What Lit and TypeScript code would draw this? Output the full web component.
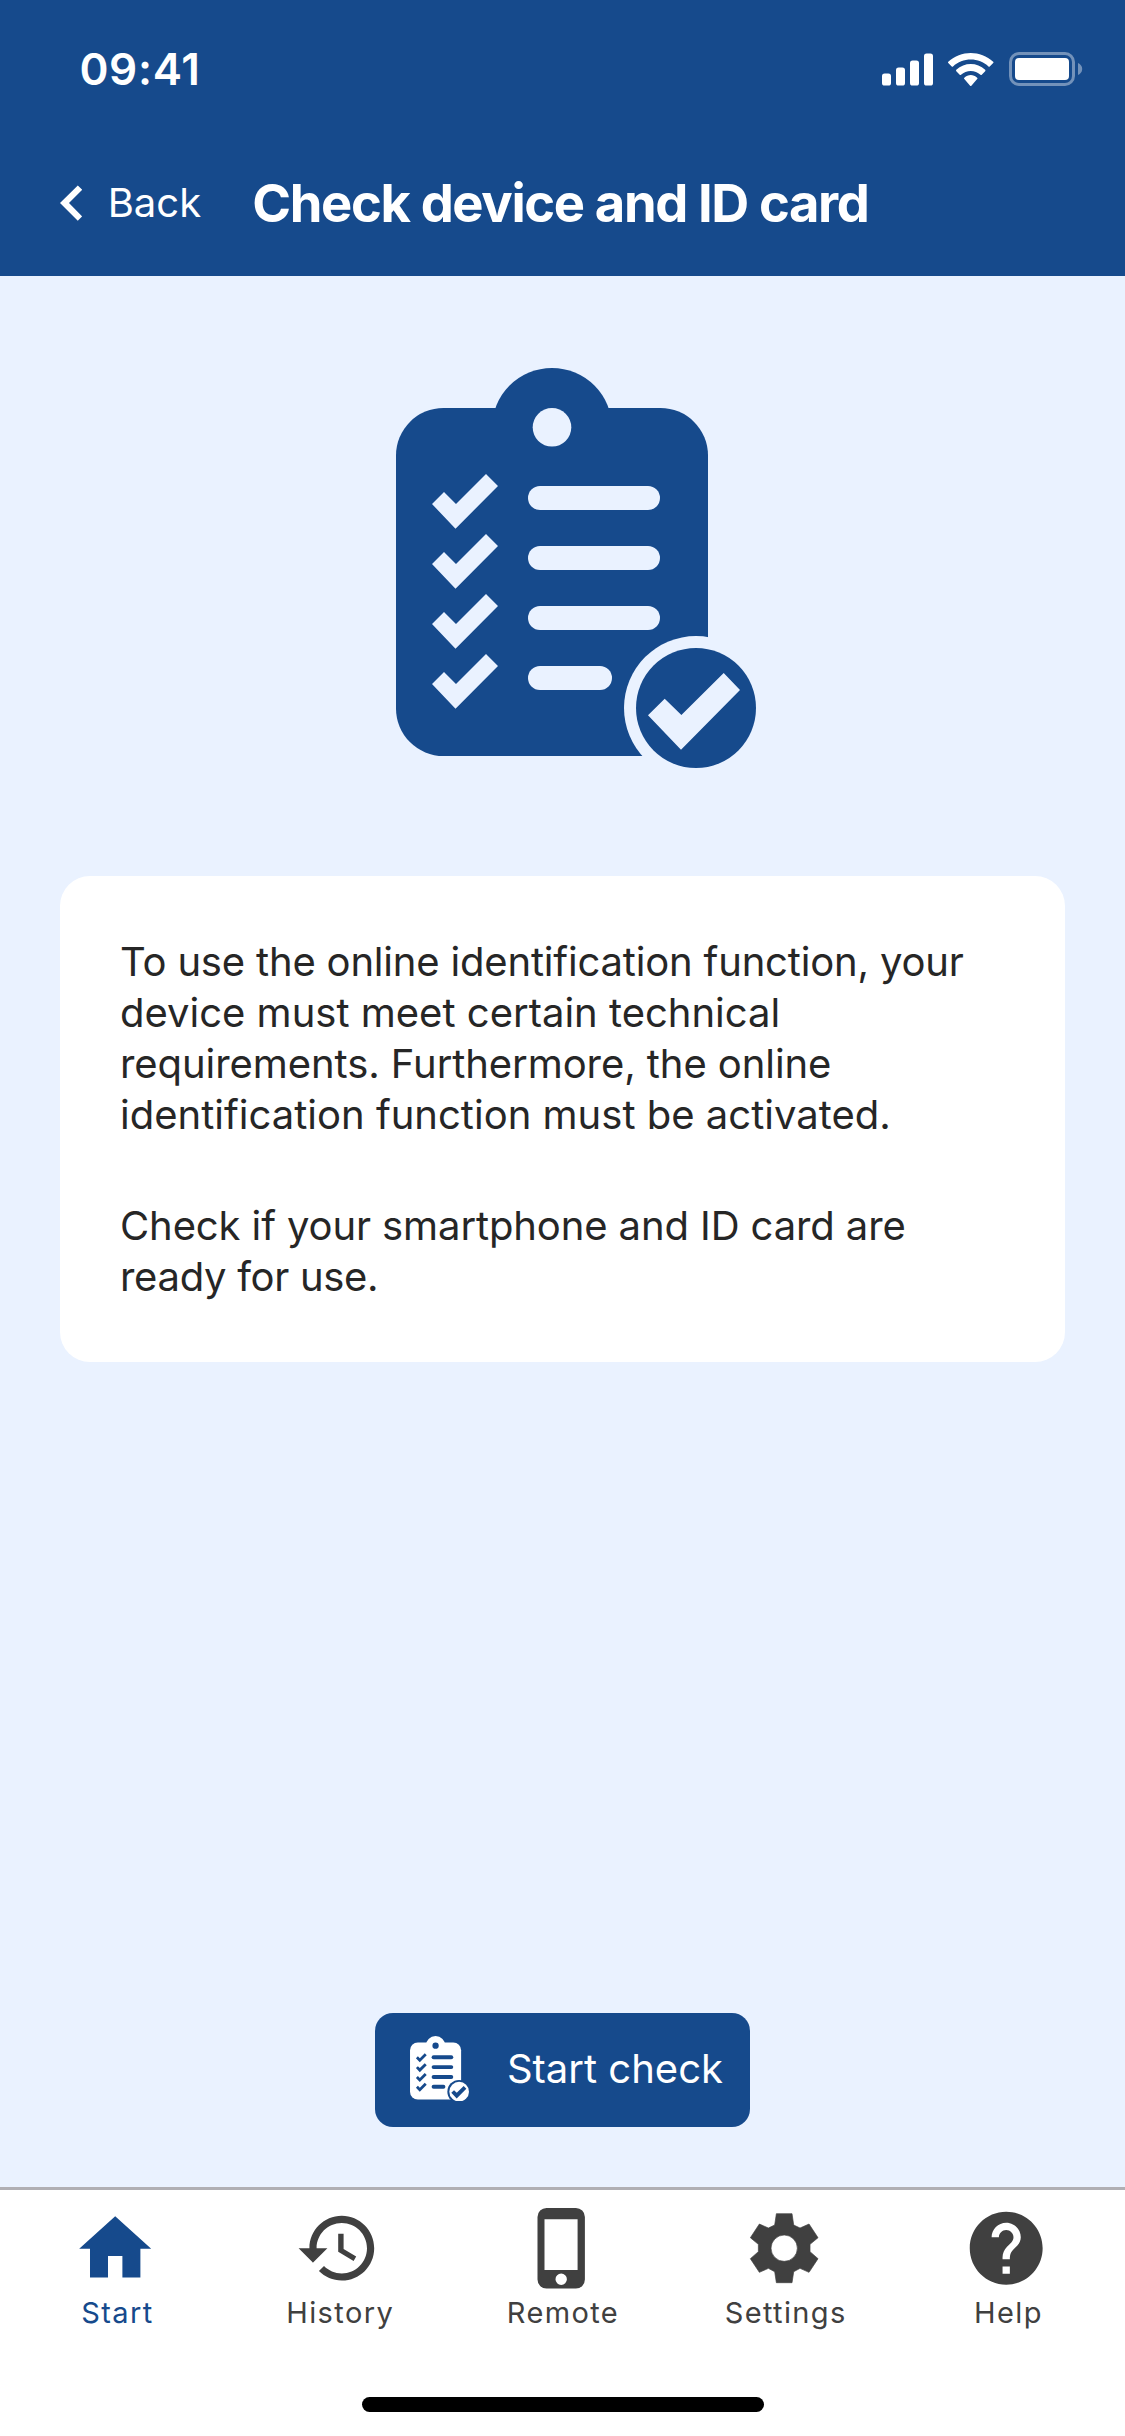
import { LitElement, html, svg, css } from "lit";
import { customElement, property } from "lit/decorators.js";

const CHECK = "M62 154L74 142L86 154L116 124L128 136L85.5 178.7Z";

@customElement("clipboard-icon")
export class ClipboardIcon extends LitElement {
  static styles = css`
    :host { display: block; }
    .art { display: block; width: 100%; height: 100%; }
    .ink { fill: var(--ink); }
    .paper { fill: var(--paper); }
  `;
  render() {
    return html`<svg class="art" viewBox="26 18 360 400">
      <circle class="ink" cx="182" cy="78" r="60" />
      <rect class="ink" x="26" y="58" width="312" height="348" rx="47.5" />
      <circle class="paper" cx="182" cy="77.3" r="19.3" />
      ${[0, 60, 120, 180].map(
        (dy) => svg`<g transform="translate(0 ${dy})">
          <path class="paper" d=${CHECK} />
          <rect class="paper" x="158" y="136" width=${dy === 180 ? 84 : 132} height="24" rx="12" />
        </g>`
      )}
      <circle class="paper" cx="326" cy="358" r="72" />
      <circle class="ink" cx="326" cy="358" r="60" />
      <path class="paper" d="M278 365.3L294.7 348.7L311.4 365L353.7 323L370 340L311 399.7Z" />
    </svg>`;
  }
}

const TAB_ICONS: Record<string, unknown> = {
  Start: html`<svg class="icon" viewBox="0 0 24 24"><path d="M10 20v-6h4v6h5v-8h3L12 3 2 12h3v8z" transform="translate(0 .15)" /></svg>`,
  History: html`<svg class="icon" viewBox="0 0 24 24"><path d="M13 3c-4.97 0-9 4.03-9 9H1l3.89 3.89.07.14L9 12H6c0-3.87 3.13-7 7-7s7 3.13 7 7-3.13 7-7 7c-1.93 0-3.68-.79-4.94-2.06l-1.42 1.42C8.27 19.99 10.51 21 13 21c4.97 0 9-4.03 9-9s-4.03-9-9-9zm-1 5v5l4.28 2.54.72-1.21-3.5-2.08V8H12z" /></svg>`,
  Remote: html`<svg class="icon" viewBox="517.5 2205.1 86.4 86.4"><path fill-rule="evenodd" d="M546 2208H575.4A9 9 0 0 1 584.4 2217V2279.7A9 9 0 0 1 575.4 2288.7H546A9 9 0 0 1 537 2279.7V2217A9 9 0 0 1 546 2208ZM544 2219.3V2270.1H577.1V2219.3ZM555 2279.3A5.7 5.7 0 1 0 566.4 2279.3A5.7 5.7 0 1 0 555 2279.3Z" /></svg>`,
  Settings: html`<svg class="icon" viewBox="3.9 .9 259.2 259.2"><path class="soft" fill-rule="evenodd" d="M110 27H157L162 61L181 70L208 58L235 99L211 119V141L235 162L208 203L181 191L162 201L157 234H110L105 201L86 191L59 203L32 162L56 141V119L32 99L59 58L86 70L105 61ZM94 130.5A39.5 39.5 0 1 0 173 130.5A39.5 39.5 0 1 0 94 130.5Z" /></svg>`,
  Help: html`<svg class="icon" viewBox=".15 .15 23.7 23.7"><path d="M12 2C6.48 2 2 6.48 2 12s4.48 10 10 10 10-4.48 10-10S17.52 2 12 2zm1 17h-2v-2h2v2zm2.07-7.75l-.9.92C13.45 12.9 13 13.5 13 15h-2v-.5c0-1.1.45-2.1 1.17-2.83l1.24-1.26c.37-.36.59-.86.59-1.41 0-1.1-.9-2-2-2s-2 .9-2 2H8c0-2.21 1.79-4 4-4s4 1.79 4 4c0 .88-.36 1.68-.93 2.25z" /></svg>`,
};

@customElement("tab-bar")
export class TabBar extends LitElement {
  @property() active = "Start";
  static styles = css`
    :host { display: block; height: 249px; box-sizing: border-box; border-top: 3px solid #b0afb4; background: #fff; }
    .tabs { display: grid; grid-template-columns: repeat(5, 1fr); padding: 15px 7px 0 4.3px; }
    .tab { display: flex; flex-direction: column; align-items: center; color: #404040; }
    .tab.active { color: #164a8c; }
    .icon { display: block; width: 86.4px; height: 86.4px; fill: currentColor; }
    .soft { stroke: currentColor; stroke-width: 2; stroke-linejoin: round; }
    .label { margin-top: 3.4px; padding-left: 3.6px; font-size: 29px; line-height: 36px; letter-spacing: 1.38px; }
    .home { width: 402px; height: 15px; margin: 66.2px auto 0; border-radius: 8px; background: #000; }
  `;
  render() {
    return html`<nav class="tabs">
        ${Object.keys(TAB_ICONS).map(
          (name) => html`<a class="tab ${name === this.active ? "active" : ""}">
            ${TAB_ICONS[name]}<span class="label">${name}</span>
          </a>`
        )}
      </nav>
      <div class="home"></div>`;
  }
}

interface Line { text: string; tracking: number }

@customElement("app-root")
export class AppRoot extends LitElement {
  static styles = css`
    :host { display: flex; flex-direction: column; width: 1125px; height: 2436px; overflow: hidden; background: #eaf2ff; color: #262626; font-family: "Inter", "Liberation Sans", sans-serif; }
    .header { height: 276px; background: #164a8c; color: #fff; }
    .status { height: 138px; box-sizing: border-box; padding: 0 42.5px 0 79.4px; display: flex; align-items: center; }
    .time { margin-right: auto; font-size: 44px; line-height: 54px; font-weight: 600; letter-spacing: .7px; }
    .glyph { display: block; fill: #fff; }
    .signal { width: 51px; height: 34px; }
    .wifi { width: 45.5px; height: 33px; margin: 0 15.5px 0 15px; }
    .battery { width: 73.5px; height: 34px; }
    .faded { opacity: .4; }
    .outline { fill: none; stroke: #fff; stroke-width: 3; opacity: .4; }
    .bar { height: 129.6px; padding-left: 60px; display: flex; align-items: center; }
    .back { width: 192.3px; display: flex; align-items: center; gap: 25.5px; font-size: 40px; line-height: 50px; }
    .chevron { width: 22.2px; height: 36px; }
    .title { margin: 0; font-size: 52.5px; line-height: 62px; font-weight: 700; letter-spacing: -1.37px; white-space: nowrap; }
    .main { flex: 1; display: flex; flex-direction: column; align-items: center; padding: 92px 60px 60px; }
    .hero { width: 360px; height: 400px; margin-left: 27px; --ink: #164a8c; --paper: #eaf2ff; }
    .card { align-self: stretch; margin-top: 108px; padding: 60px; border-radius: 30px; background: #fff; font-size: 40px; line-height: 51px; }
    .para { margin: 0; }
    .para + .para { margin-top: 60px; }
    .line { display: block; white-space: nowrap; }
    .start { margin-top: auto; width: 375px; height: 114px; box-sizing: border-box; padding: 0 0 3px 35.3px; display: flex; align-items: center; gap: 37.6px; border: 0; border-radius: 18px; background: #164a8c; color: #fff; font-family: inherit; font-size: 40px; line-height: 50px; }
    .start-icon { width: 59px; height: 65.5px; --ink: #fff; --paper: #164a8c; }
  `;

  private paragraphs: Line[][] = [
    [
      { text: "To use the online identification function, your", tracking: -0.18 },
      { text: "device must meet certain technical", tracking: 0 },
      { text: "requirements. Furthermore, the online", tracking: -0.07 },
      { text: "identification function must be activated.", tracking: 0.01 },
    ],
    [
      { text: "Check if your smartphone and ID card are", tracking: -0.11 },
      { text: "ready for use.", tracking: -0.3 },
    ],
  ];

  render() {
    return html`
      <header class="header">
        <div class="status">
          <span class="time">09:41</span>
          <svg class="glyph signal" viewBox="0 0 51 34">
            <rect x="0" y="21.5" width="9" height="12" rx="2.6" />
            <rect x="14" y="15.5" width="9" height="18" rx="2.6" />
            <rect x="28" y="8.5" width="9" height="25" rx="2.6" />
            <rect x="42" y="1.5" width="9" height="32" rx="2.6" />
          </svg>
          <svg class="glyph wifi" viewBox="0 0 17.15 12.33" preserveAspectRatio="none">
            <path d="M8.57 2.466C11.058 2.466 13.451 3.388 15.254 5.042C15.39 5.17 15.607 5.168 15.74 5.038L17.038 3.775C17.106 3.709 17.143 3.62 17.143 3.527C17.142 3.435 17.103 3.346 17.034 3.281C12.303 -1.068 4.838 -1.068 .107 3.281C.038 3.346 -.001 3.435 0 3.527C.001 3.62 .039 3.709 .106 3.775L1.404 5.038C1.538 5.168 1.755 5.17 1.891 5.042C3.694 3.388 6.087 2.466 8.57 2.466ZM8.568 6.687C9.925 6.687 11.234 7.198 12.24 8.122C12.376 8.253 12.591 8.251 12.723 8.116L14.011 6.797C14.078 6.728 14.116 6.634 14.115 6.536C14.114 6.439 14.075 6.346 14.006 6.278C10.942 3.388 6.197 3.388 3.133 6.278C3.064 6.346 3.024 6.439 3.024 6.537C3.023 6.634 3.06 6.728 3.128 6.797L4.415 8.116C4.548 8.251 4.762 8.253 4.898 8.122C5.904 7.199 7.212 6.687 8.568 6.687ZM11.092 9.48C11.094 9.585 11.057 9.687 10.99 9.761L8.813 12.216C8.749 12.288 8.662 12.328 8.572 12.328C8.481 12.328 8.394 12.288 8.33 12.216L6.153 9.761C6.086 9.687 6.049 9.585 6.051 9.48C6.053 9.375 6.094 9.275 6.164 9.204C7.554 7.904 9.59 7.904 10.98 9.204C11.05 9.275 11.09 9.375 11.092 9.48Z" />
          </svg>
          <svg class="glyph battery" viewBox="0 0 73.5 34">
            <rect class="outline" x="1.5" y="1.5" width="63" height="31" rx="8.5" />
            <rect x="6" y="6" width="54" height="22" rx="4" />
            <path class="faded" d="M69 11C71.6 12 73.2 14.4 73.2 17C73.2 19.6 71.6 22 69 23Z" />
          </svg>
        </div>
        <div class="bar">
          <a class="back">
            <svg class="glyph chevron" viewBox="0 0 22.2 36"><path d="M0 18L17.8 .4L22.2 4.7L9 18L22.2 31.4L17.8 35.7Z" /></svg>
            <span>Back</span>
          </a>
          <h1 class="title">Check device and ID card</h1>
        </div>
      </header>
      <main class="main">
        <clipboard-icon class="hero"></clipboard-icon>
        <section class="card">
          ${this.paragraphs.map(
            (lines) => html`<p class="para">${lines.map(
              (line) => html`<span class="line" style="letter-spacing:${line.tracking}px">${line.text} </span>`
            )}</p>`
          )}
        </section>
        <button class="start">
          <clipboard-icon class="start-icon"></clipboard-icon>
          <span>Start check</span>
        </button>
      </main>
      <tab-bar active="Start"></tab-bar>
    `;
  }
}
